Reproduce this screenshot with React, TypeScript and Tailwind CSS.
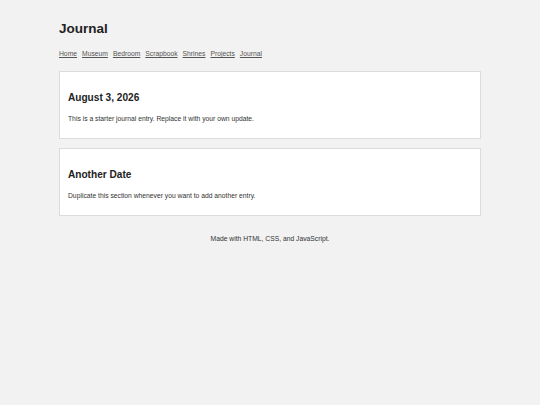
const links = ['Home', 'Museum', 'Bedroom', 'Scrapbook', 'Shrines', 'Projects', 'Journal'];

const entries = [
  { title: 'August 3, 2026', body: 'This is a starter journal entry. Replace it with your own update.' },
  { title: 'Another Date', body: 'Duplicate this section whenever you want to add another entry.' },
];

export default function App() {
  return (
    <div className="min-h-[405px] w-full bg-[#f2f2f2] font-['Liberation_Sans',Arial,sans-serif] text-[#222]">
      <div className="mx-auto flex w-[422px] flex-col pt-[21px]">
        <h1 className="text-[13.5px] font-bold leading-[15px]">Journal</h1>

        <nav className="mt-[14px] flex gap-[5px] text-[6.75px] leading-[8px] text-[#555]">
          {links.map((l) => (
            <a key={l} href="#" className="underline">
              {l}
            </a>
          ))}
        </nav>

        <div className="mt-[13px] flex flex-col gap-[9px]">
          {entries.map((e) => (
            <section
              key={e.title}
              className="h-[68px] border border-[#dcdcdc] bg-white px-[8px] pt-[20px]"
            >
              <h2 className="text-[10.1px] font-bold leading-[12px]">{e.title}</h2>
              <p className="mt-[11px] text-[6.75px] leading-[8px] text-[#333]">{e.body}</p>
            </section>
          ))}
        </div>

        <footer className="mt-[19px] text-center text-[6.75px] leading-[8px] text-[#333]">
          Made with HTML, CSS, and JavaScript.
        </footer>
      </div>
    </div>
  );
}
